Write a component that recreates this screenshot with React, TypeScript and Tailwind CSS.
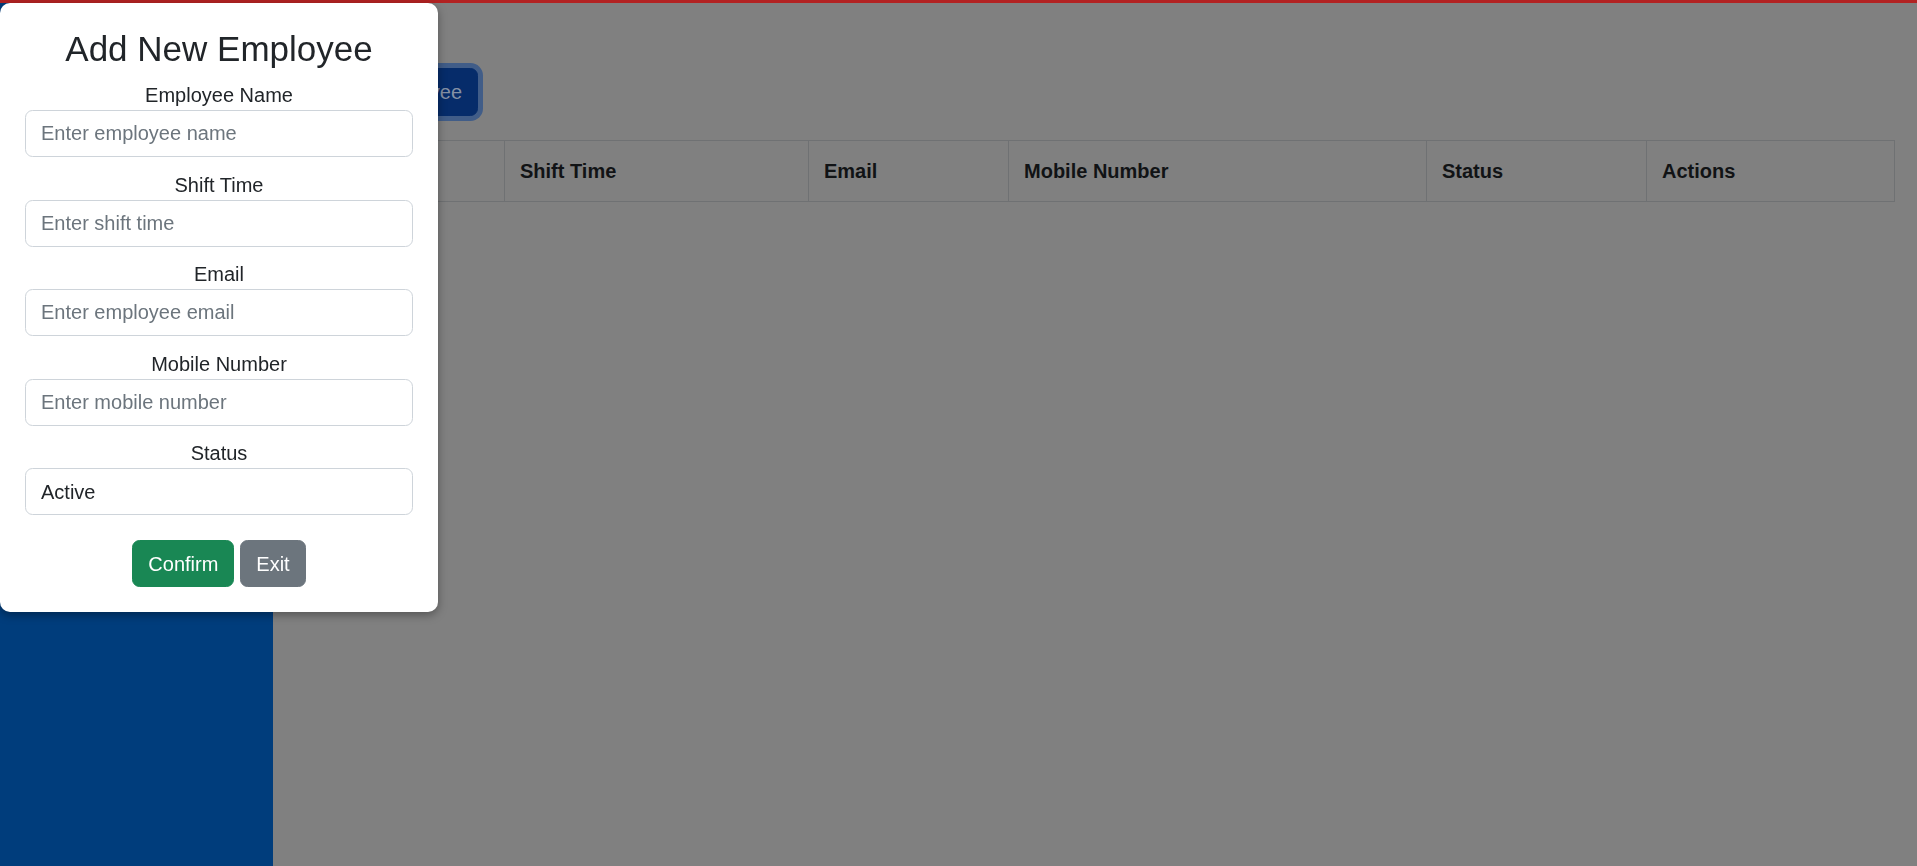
import * as React from 'react';

const fields = [
  { label: 'Employee Name', placeholder: 'Enter employee name' },
  { label: 'Shift Time', placeholder: 'Enter shift time' },
  { label: 'Email', placeholder: 'Enter employee email' },
  { label: 'Mobile Number', placeholder: 'Enter mobile number' },
];

const columns = [
  { title: 'Name', width: 'w-[206px]' },
  { title: 'Shift Time', width: 'w-[304px]' },
  { title: 'Email', width: 'w-[200px]' },
  { title: 'Mobile Number', width: 'w-[418px]' },
  { title: 'Status', width: 'w-[220px]' },
  { title: 'Actions', width: '' },
];

const Field: React.FC<{ label: string; children: React.ReactNode }> = ({ label, children }) => (
  <div className="mb-[12.5px]">
    <label className="block text-center text-[20px] leading-[30px] text-[#212529]">{label}</label>
    {children}
  </div>
);

const inputClass =
  'block w-full h-[47px] rounded-[7.5px] border border-[#ced4da] bg-white px-[15px] text-[20px] leading-[30px] text-[#212529] placeholder:text-[#6c757d] outline-none';

const AddEmployeeModal: React.FC = () => {
  const [status, setStatus] = React.useState('Active');
  return (
    <div className="fixed left-0 top-[3px] z-20 w-[438px] rounded-[10px] bg-white p-[25px] shadow-[0_3px_10px_rgba(0,0,0,0.35)]">
      <h3 className="mb-[10px] text-center text-[35px] leading-[42px] font-medium text-[#212529]">
        Add New Employee
      </h3>
      {fields.map((f) => (
        <Field key={f.label} label={f.label}>
          <input type="text" placeholder={f.placeholder} className={inputClass} />
        </Field>
      ))}
      <Field label="Status">
        <select
          value={status}
          onChange={(e) => setStatus(e.target.value)}
          className={inputClass + ' appearance-none'}
        >
          <option>Active</option>
          <option>Inactive</option>
        </select>
      </Field>
      <div className="mt-[25px] flex justify-center gap-[6px]">
        <button className="h-[47px] rounded-[7.5px] border border-[#198754] bg-[#198754] px-[15px] text-[20px] leading-[30px] text-white">
          Confirm
        </button>
        <button className="h-[47px] rounded-[7.5px] border border-[#6c757d] bg-[#6c757d] px-[15px] text-[20px] leading-[30px] text-white">
          Exit
        </button>
      </div>
    </div>
  );
};

export default function App() {
  return (
    <div
      className="relative flex h-[866px] w-full flex-col overflow-hidden bg-[#808080]"
      style={{ fontFamily: '"Liberation Sans", Arial, sans-serif' }}
    >
      <div className="h-[3px] w-full shrink-0 bg-[#b22222]" />
      <div className="flex flex-1">
        <aside className="w-[273px] shrink-0 bg-[#003d7c]" />
        <main className="flex-1 pl-[25px] pr-[22px] pt-[65px]">
          <div className="pl-[18px]">
            <button className="h-[48px] rounded-[7.5px] border border-[#062c6a] bg-[#062c6a] px-[15px] text-[20px] leading-[30px] text-[#8591a5] shadow-[0_0_0_5px_#415d88]">
              Add Employee
            </button>
          </div>
          <table className="mt-[24px] w-full table-fixed border-collapse">
            <thead>
              <tr>
                {columns.map((c) => (
                  <th
                    key={c.title}
                    className={`${c.width} border border-[#6f7173] px-[15px] py-[15px] text-left text-[20px] leading-[30px] font-bold text-[#111315]`}
                  >
                    {c.title}
                  </th>
                ))}
              </tr>
            </thead>
          </table>
        </main>
      </div>
      <AddEmployeeModal />
    </div>
  );
}
